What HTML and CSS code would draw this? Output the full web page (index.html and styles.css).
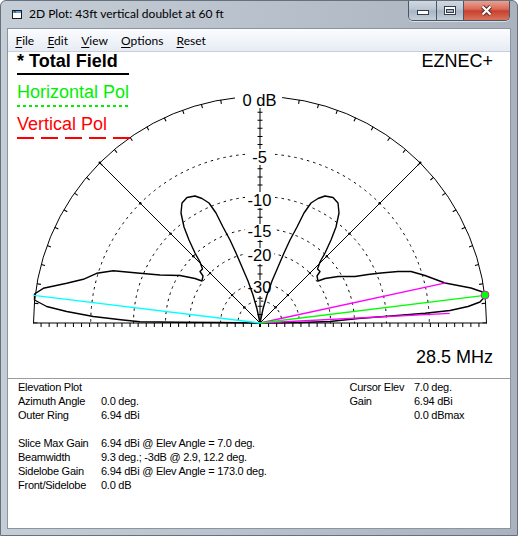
FILE: index.html
```html
<!DOCTYPE html>
<html>
<head>
<meta charset="utf-8">
<link rel="stylesheet" href="styles.css">
</head>
<body>
<div class="window">
  <div class="titlebar">
    <svg class="app-icon" width="10" height="9" viewBox="0 0 10 9"><rect x="0.5" y="0.5" width="9" height="8" fill="#fff" stroke="#1b1b1b"/><rect x="1" y="1" width="8" height="2" fill="#5b9fe0"/><path d="M0.5 0.5 L3 0.5 L3 2.5" fill="none" stroke="#1b1b1b"/></svg>
    <span class="title">2D Plot: 43ft vertical doublet at 60 ft</span>
    <div class="caption">
      <div class="cbtn cbtn-min"><svg width="12" height="5" viewBox="0 0 12 5"><rect x="0.5" y="0.5" width="11" height="4" fill="#fff" stroke="#333d4b"/></svg></div>
      <div class="cbtn cbtn-max"><svg width="12" height="9" viewBox="0 0 12 9"><rect x="0.5" y="0.5" width="11" height="8" fill="#fff" stroke="#333d4b"/><rect x="2.5" y="3.5" width="7" height="3" fill="#a9b5c3" stroke="#333d4b"/></svg></div>
      <div class="cbtn cbtn-close"><svg width="13" height="11" viewBox="0 0 13 11"><path d="M2.5 1.5 L10.5 9.5 M10.5 1.5 L2.5 9.5" stroke="#5a2a24" stroke-width="4.2"/><path d="M2.5 1.5 L10.5 9.5 M10.5 1.5 L2.5 9.5" stroke="#fff" stroke-width="2.2"/></svg></div>
    </div>
  </div>
  <div class="client">
    <div class="menubar">
      <span class="menu-item"><u>F</u>ile</span>
      <span class="menu-item"><u>E</u>dit</span>
      <span class="menu-item"><u>V</u>iew</span>
      <span class="menu-item"><u>O</u>ptions</span>
      <span class="menu-item"><u>R</u>eset</span>
    </div>
    <div class="plot">
      <svg class="plot-canvas" width="502" height="326" viewBox="8 52 502 326">
        <defs>
          <clipPath id="upper"><rect x="0" y="0" width="600" height="323.5"/></clipPath>
        </defs>
        <g clip-path="url(#upper)" fill="none" stroke="#000">
          <circle cx="260" cy="323" r="226.5" stroke-width="1"/>
          <circle cx="260" cy="323" r="224.5" stroke-width="4" pathLength="72" stroke-dasharray="0.055 0.945" stroke-dashoffset="0.0275"/>
          <g stroke-dasharray="2.5 4" stroke-width="1">
            <circle cx="260" cy="323" r="169.3"/>
            <circle cx="260" cy="323" r="126.5"/>
            <circle cx="260" cy="323" r="94.5"/>
            <circle cx="260" cy="323" r="70.6"/>
            <circle cx="260" cy="323" r="39.4"/>
            <circle cx="260" cy="323" r="22"/>
          </g>
        </g>
        <g fill="none" stroke="#000" stroke-width="1">
          <line x1="33.5" y1="323" x2="486.5" y2="323"/>
          <line x1="260" y1="325" x2="486.5" y2="325" stroke-width="4" stroke-dasharray="1 7.09"/>
          <line x1="260" y1="325" x2="33.5" y2="325" stroke-width="4" stroke-dasharray="1 7.09"/>
          <line x1="260" y1="323" x2="260" y2="97"/>
          <line x1="260" y1="323" x2="260" y2="97" stroke-width="5" stroke-dasharray="1 7.09"/>
          <line x1="260" y1="323" x2="99.8" y2="162.8"/>
          <line x1="260" y1="323" x2="420.2" y2="162.8"/>
        </g>
        <g fill="#000">
          <circle cx="99.8" cy="162.8" r="1.3"/><circle cx="420.2" cy="162.8" r="1.3"/>
          <circle cx="140.3" cy="203.3" r="1.2"/><circle cx="379.7" cy="203.3" r="1.2"/>
          <circle cx="170.6" cy="233.6" r="1.2"/><circle cx="349.4" cy="233.6" r="1.2"/>
          <circle cx="193.2" cy="256.2" r="1.2"/><circle cx="326.8" cy="256.2" r="1.2"/>
          <circle cx="210.1" cy="273.1" r="1.2"/><circle cx="309.9" cy="273.1" r="1.2"/>
          <circle cx="232.1" cy="295.1" r="1.2"/><circle cx="287.9" cy="295.1" r="1.2"/>
          <circle cx="244.4" cy="307.4" r="1.2"/><circle cx="275.6" cy="307.4" r="1.2"/>
        </g>
        <g fill="#fff">
          <rect x="235" y="92" width="47" height="16"/>
          <rect x="249" y="149" width="22" height="16"/>
          <rect x="245" y="192" width="29" height="16"/>
          <rect x="245" y="224" width="29" height="16"/>
          <rect x="245" y="248" width="29" height="16"/>
          <rect x="245" y="280" width="29" height="16"/>
        </g>
        <polyline fill="none" stroke="#000" stroke-width="1.4" stroke-linejoin="round" points="260,323 300,322.5 330,321.5 358,318.5 391,316 425,313.3 450,310.5 468,306.5 480,302 485.5,296 485.5,293 471,288 445,283 425,275.5 411,271.5 398,271.5 381,273 368,274.5 355,276.5 338,276.5 325,278.5 318,281 317,276 320,271.5 317.5,269 320,262 325,253 331,240 336,227 339,213 338,203 333,197.5 325,196 318,198.5 311,203 304,213 297,227 290,240 284,253 278,267 272,281 267,295 263,309 260,323"/>
        <polyline fill="none" stroke="#000" stroke-width="1.4" stroke-linejoin="round" points="260,323 220,322.5 180,322.3 140,321.8 123,320 93.3,316.5 66.7,311.5 46.7,306.5 34.5,300 34.5,294 43.3,288.3 66.7,283.3 83.3,279.3 96.7,273.3 113.3,270.7 140,273.3 160,275 180,275.5 195,278.5 202,281 203,276 200,271.5 202.5,269 200,262 195,253 189,240 184,227 181,213 182,203 187,197.5 195,196 202,198.5 209,203 216,213 223,227 230,240 236,253 242,267 248,281 253,295 257,309 260,323"/>
        <g fill="none" stroke-width="1.3">
          <line x1="260" y1="323" x2="33.8" y2="295.4" stroke="#00ffff"/>
          <line x1="260" y1="323" x2="445.7" y2="282.8" stroke="#ff00ff"/>
          <line x1="260" y1="323" x2="449.8" y2="313.4" stroke="#ff00ff"/>
          <line x1="260" y1="323" x2="484.8" y2="295.4" stroke="#00ff00"/>
        </g>
        <circle cx="485" cy="295" r="4" fill="#00ff00" stroke="#e000e0" stroke-width="0.8"/>
        <g class="db-labels" text-anchor="middle">
          <text x="259.5" y="106">0 dB</text>
          <text x="259.5" y="163">-5</text>
          <text x="259.5" y="206">-10</text>
          <text x="259.5" y="237.3">-15</text>
          <text x="259.5" y="261">-20</text>
          <text x="259.5" y="293.3">-30</text>
        </g>
      </svg>
      <div class="plot-top">
        <div class="legend">
          <div class="legend-item">
            <div class="legend-text legend-total">* Total Field</div>
            <div class="legend-line line-total"></div>
          </div>
          <div class="legend-item">
            <div class="legend-text legend-hpol">Horizontal Pol</div>
            <div class="legend-line line-hpol"></div>
          </div>
          <div class="legend-item">
            <div class="legend-text legend-vpol">Vertical Pol</div>
            <div class="legend-line line-vpol"></div>
          </div>
        </div>
        <div class="brand">EZNEC+</div>
      </div>
      <div class="freq">28.5 MHz</div>
    </div>
    <div class="info">
      <div class="info-main">
        <span>Elevation Plot</span><span></span>
        <span>Azimuth Angle</span><span>0.0 deg.</span>
        <span>Outer Ring</span><span>6.94 dBi</span>
        <span class="blank"></span><span class="blank"></span>
        <span>Slice Max Gain</span><span>6.94 dBi @ Elev Angle = 7.0 deg.</span>
        <span>Beamwidth</span><span>9.3 deg.; -3dB @ 2.9, 12.2 deg.</span>
        <span>Sidelobe Gain</span><span>6.94 dBi @ Elev Angle = 173.0 deg.</span>
        <span>Front/Sidelobe</span><span>0.0 dB</span>
      </div>
      <div class="info-cursor">
        <span>Cursor Elev</span><span>7.0 deg.</span>
        <span>Gain</span><span>6.94 dBi</span>
        <span></span><span>0.0 dBmax</span>
      </div>
    </div>
  </div>
</div>
</body>
</html>
```
FILE: styles.css
```css
html, body {
  margin: 0;
  padding: 0;
  background: #ffffff;
}

.window {
  width: 518px;
  height: 536px;
  box-sizing: border-box;
  border: 1px solid #67717c;
  border-radius: 6px 6px 0 0;
  background: linear-gradient(to right, #c5cdd6 0%, #bac3cd 45%, #a9b2bd 100%);
  display: flex;
  flex-direction: column;
  overflow: hidden;
}

.titlebar {
  flex: none;
  height: 27px;
  display: flex;
  align-items: flex-start;
}

.app-icon {
  flex: none;
  margin: 9px 0 0 11px;
}

.title {
  margin: 5px 0 0 7px;
  font-family: Lato, "Noto Sans", sans-serif;
  font-size: 12px;
  line-height: 16px;
  color: #000;
  white-space: nowrap;
}

.caption {
  margin: -1px 7px 0 auto;
  display: flex;
  height: 20px;
  border: 1px solid #4b5664;
  border-top: none;
  border-radius: 0 0 5px 5px;
  overflow: hidden;
  box-shadow: 0 1px 0 rgba(255, 255, 255, 0.55);
}

.cbtn {
  display: flex;
  align-items: center;
  justify-content: center;
  box-sizing: border-box;
  height: 20px;
}

.cbtn-min {
  width: 28px;
  border-right: 1px solid #4b5664;
  background: linear-gradient(#d3dbe4 0%, #bcc7d3 45%, #a9b5c3 55%, #c3cfdb 100%);
  align-items: flex-end;
  padding-bottom: 5px;
}

.cbtn-max {
  width: 27px;
  border-right: 1px solid #4b5664;
  background: linear-gradient(#d3dbe4 0%, #bcc7d3 45%, #a9b5c3 55%, #c3cfdb 100%);
  padding-top: 1px;
}

.cbtn-close {
  width: 45px;
  background: linear-gradient(#e9a99b 0%, #d96b58 45%, #c7402e 55%, #d9735c 100%);
  padding-top: 1px;
}

.client {
  flex: 1;
  margin: 0 6px 6px 6px;
  border: 1px solid #8b95a1;
  background: #ffffff;
  display: flex;
  flex-direction: column;
  min-height: 0;
}

.menubar {
  flex: none;
  height: 22px;
  border-bottom: 1px solid #c9cfd8;
  background: linear-gradient(#fbfcfe 0%, #f1f4f9 50%, #e6ebf4 100%);
  display: flex;
  align-items: center;
  padding-left: 0.8px;
  font-family: Lato, "Noto Sans", sans-serif;
  font-size: 12px;
  color: #000;
}

.menu-item {
  padding: 0 6.6px;
  line-height: 15px;
}

.menu-item u {
  text-decoration-thickness: 1px;
  text-underline-offset: 2px;
}

.plot {
  flex: none;
  height: 326px;
  box-sizing: border-box;
  position: relative;
  display: flex;
  flex-direction: column;
  padding: 0 17px 12px 9px;
  font-family: "Liberation Sans", Arial, sans-serif;
  font-size: 18px;
  line-height: 18px;
  color: #000;
}

.plot-canvas {
  position: absolute;
  left: 0;
  top: 0;
  display: block;
}

.db-labels {
  font-family: "Liberation Sans", Arial, sans-serif;
  font-size: 16.5px;
  fill: #000;
}

.plot-top {
  position: relative;
  display: flex;
  justify-content: space-between;
  align-items: flex-start;
}

.legend {
  display: flex;
  flex-direction: column;
  width: 113px;
}

.legend-item + .legend-item {
  margin-top: 8px;
}

.legend-text {
  white-space: nowrap;
}

.legend-total {
  font-weight: bold;
}

.legend-hpol {
  color: #00f000;
}

.legend-vpol {
  color: #ff0000;
}

.legend-line {
  height: 2px;
  margin-top: 3px;
}

.line-total {
  background: #000;
  width: 112px;
}

.line-hpol {
  margin-top: 4px;
  background: repeating-linear-gradient(90deg, #00f000 0 3px, transparent 3px 6px);
  width: 112px;
}

.line-vpol {
  margin-top: 4px;
  background: repeating-linear-gradient(90deg, #ff0000 0 17px, transparent 17px 24px);
  width: 113px;
}

.brand {
  white-space: nowrap;
}

.freq {
  position: relative;
  margin-top: auto;
  align-self: flex-end;
  white-space: nowrap;
}

.info {
  flex: 1;
  border-top: 1px solid #9c9c9c;
  display: flex;
  padding: 1px 0 0 10px;
  font-family: "Liberation Sans", Arial, sans-serif;
  font-size: 11px;
  letter-spacing: -0.25px;
  line-height: 14px;
  color: #000;
}

.info-main {
  display: grid;
  grid-template-columns: 83px 248.5px;
  grid-auto-rows: 14px;
  white-space: nowrap;
}

.info-cursor {
  display: grid;
  grid-template-columns: 64.5px auto;
  grid-auto-rows: 14px;
  white-space: nowrap;
}
```
